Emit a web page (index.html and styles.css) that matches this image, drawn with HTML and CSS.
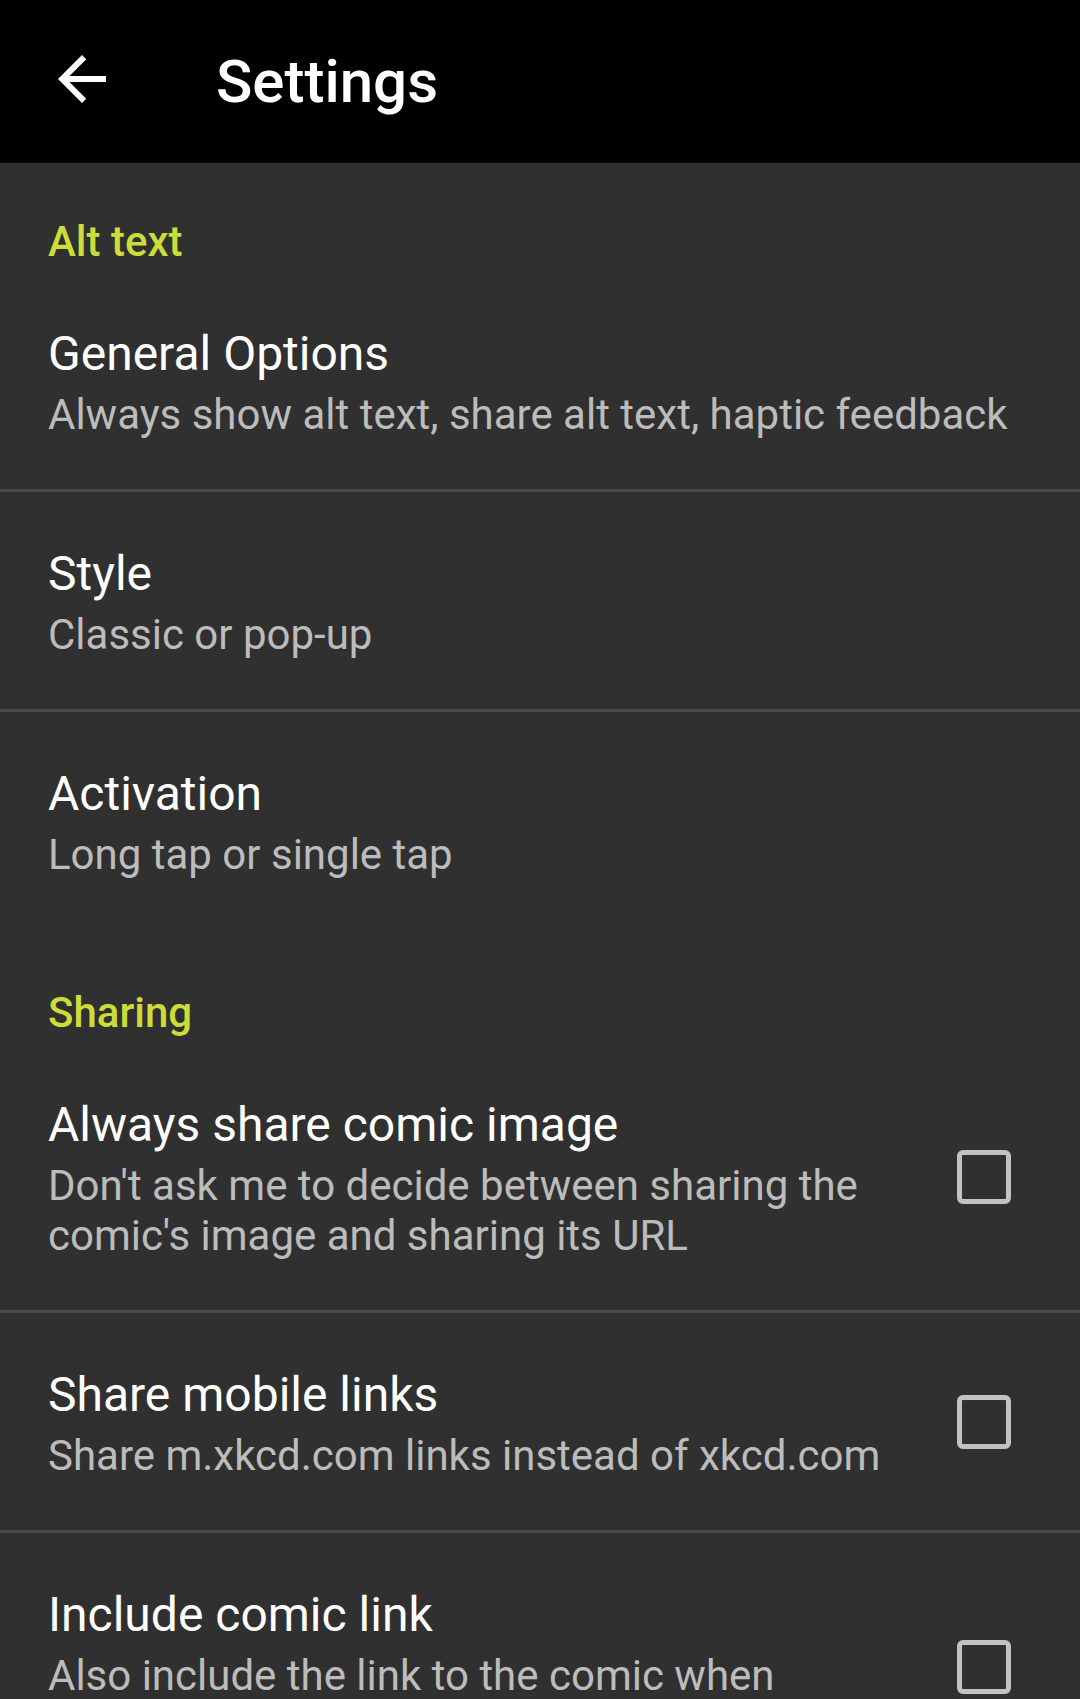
FILE: index.html
```html
<!DOCTYPE html>
<html lang="en">
<head>
<meta charset="utf-8">
<title>Settings</title>
<link rel="stylesheet" href="styles.css">
</head>
<body>
<header class="appbar">
  <button class="nav-btn" aria-label="Navigate up">
    <svg viewBox="0 0 24 24" width="72" height="72" aria-hidden="true">
      <path fill="#ffffff" d="M20 11H7.83l5.59-5.59L12 4l-8 8 8 8 1.41-1.41L7.83 13H20v-2z"/>
    </svg>
  </button>
  <h1 class="appbar-title">Settings</h1>
</header>
<main class="prefs">
  <section class="category">
    <h2 class="category-title">Alt text</h2>
    <div class="pref">
      <div class="pref-text">
        <div class="pref-title">General Options</div>
        <div class="pref-summary">Always show alt text, share alt text, haptic feedback</div>
      </div>
    </div>
    <div class="pref">
      <div class="pref-text">
        <div class="pref-title">Style</div>
        <div class="pref-summary">Classic or pop-up</div>
      </div>
    </div>
    <div class="pref">
      <div class="pref-text">
        <div class="pref-title">Activation</div>
        <div class="pref-summary">Long tap or single tap</div>
      </div>
    </div>
  </section>
  <section class="category">
    <h2 class="category-title">Sharing</h2>
    <div class="pref">
      <div class="pref-text">
        <div class="pref-title">Always share comic image</div>
        <div class="pref-summary">Don't ask me to decide between sharing the comic's image and sharing its URL</div>
      </div>
      <span class="checkbox" role="checkbox" aria-checked="false"></span>
    </div>
    <div class="pref">
      <div class="pref-text">
        <div class="pref-title">Share mobile links</div>
        <div class="pref-summary">Share m.xkcd.com links instead of xkcd.com</div>
      </div>
      <span class="checkbox" role="checkbox" aria-checked="false"></span>
    </div>
    <div class="pref">
      <div class="pref-text">
        <div class="pref-title">Include comic link</div>
        <div class="pref-summary">Also include the link to the comic when sharing the comic's image</div>
      </div>
      <span class="checkbox" role="checkbox" aria-checked="false"></span>
    </div>
  </section>
</main>
</body>
</html>
```

FILE: styles.css
```css
html, body {
  margin: 0;
  padding: 0;
}

body {
  background: #303030;
  font-family: Roboto, "Noto Sans", "Liberation Sans", sans-serif;
  color: #ffffff;
  width: 1080px;
  overflow: hidden;
}

.appbar {
  height: 163px;
  background: #000000;
  display: flex;
  align-items: center;
}

.nav-btn {
  width: 72px;
  height: 72px;
  margin-left: 46px;
  margin-bottom: 5px;
  padding: 0;
  border: 0;
  background: transparent;
  display: flex;
}

.appbar-title {
  margin: 0 0 0 98px;
  font-size: 60px;
  line-height: 70px;
  font-weight: 500;
  color: #ffffff;
}

.category-title {
  margin: 0 0 6px 0;
  padding: 55px 48px 0 48px;
  font-size: 42px;
  line-height: 48px;
  font-weight: 500;
  color: #cddc39;
}

.category + .category .category-title {
  padding-top: 57px;
}

.pref {
  display: flex;
  align-items: center;
  border-bottom: 3px solid #4a4a4a;
}

.pref:last-child {
  border-bottom-color: transparent;
}

.pref-text {
  flex: 1;
  padding: 54px 48px 49px 48px;
}

.pref-title {
  font-size: 48px;
  line-height: 56px;
  color: #ffffff;
}

.pref-summary {
  margin-top: 8px;
  font-size: 42px;
  line-height: 50px;
  color: #bcbcbc;
}

.checkbox {
  flex: none;
  width: 54px;
  height: 54px;
  box-sizing: border-box;
  border: 5.5px solid #c2c2c2;
  border-radius: 6px;
  margin-right: 69px;
}
```
